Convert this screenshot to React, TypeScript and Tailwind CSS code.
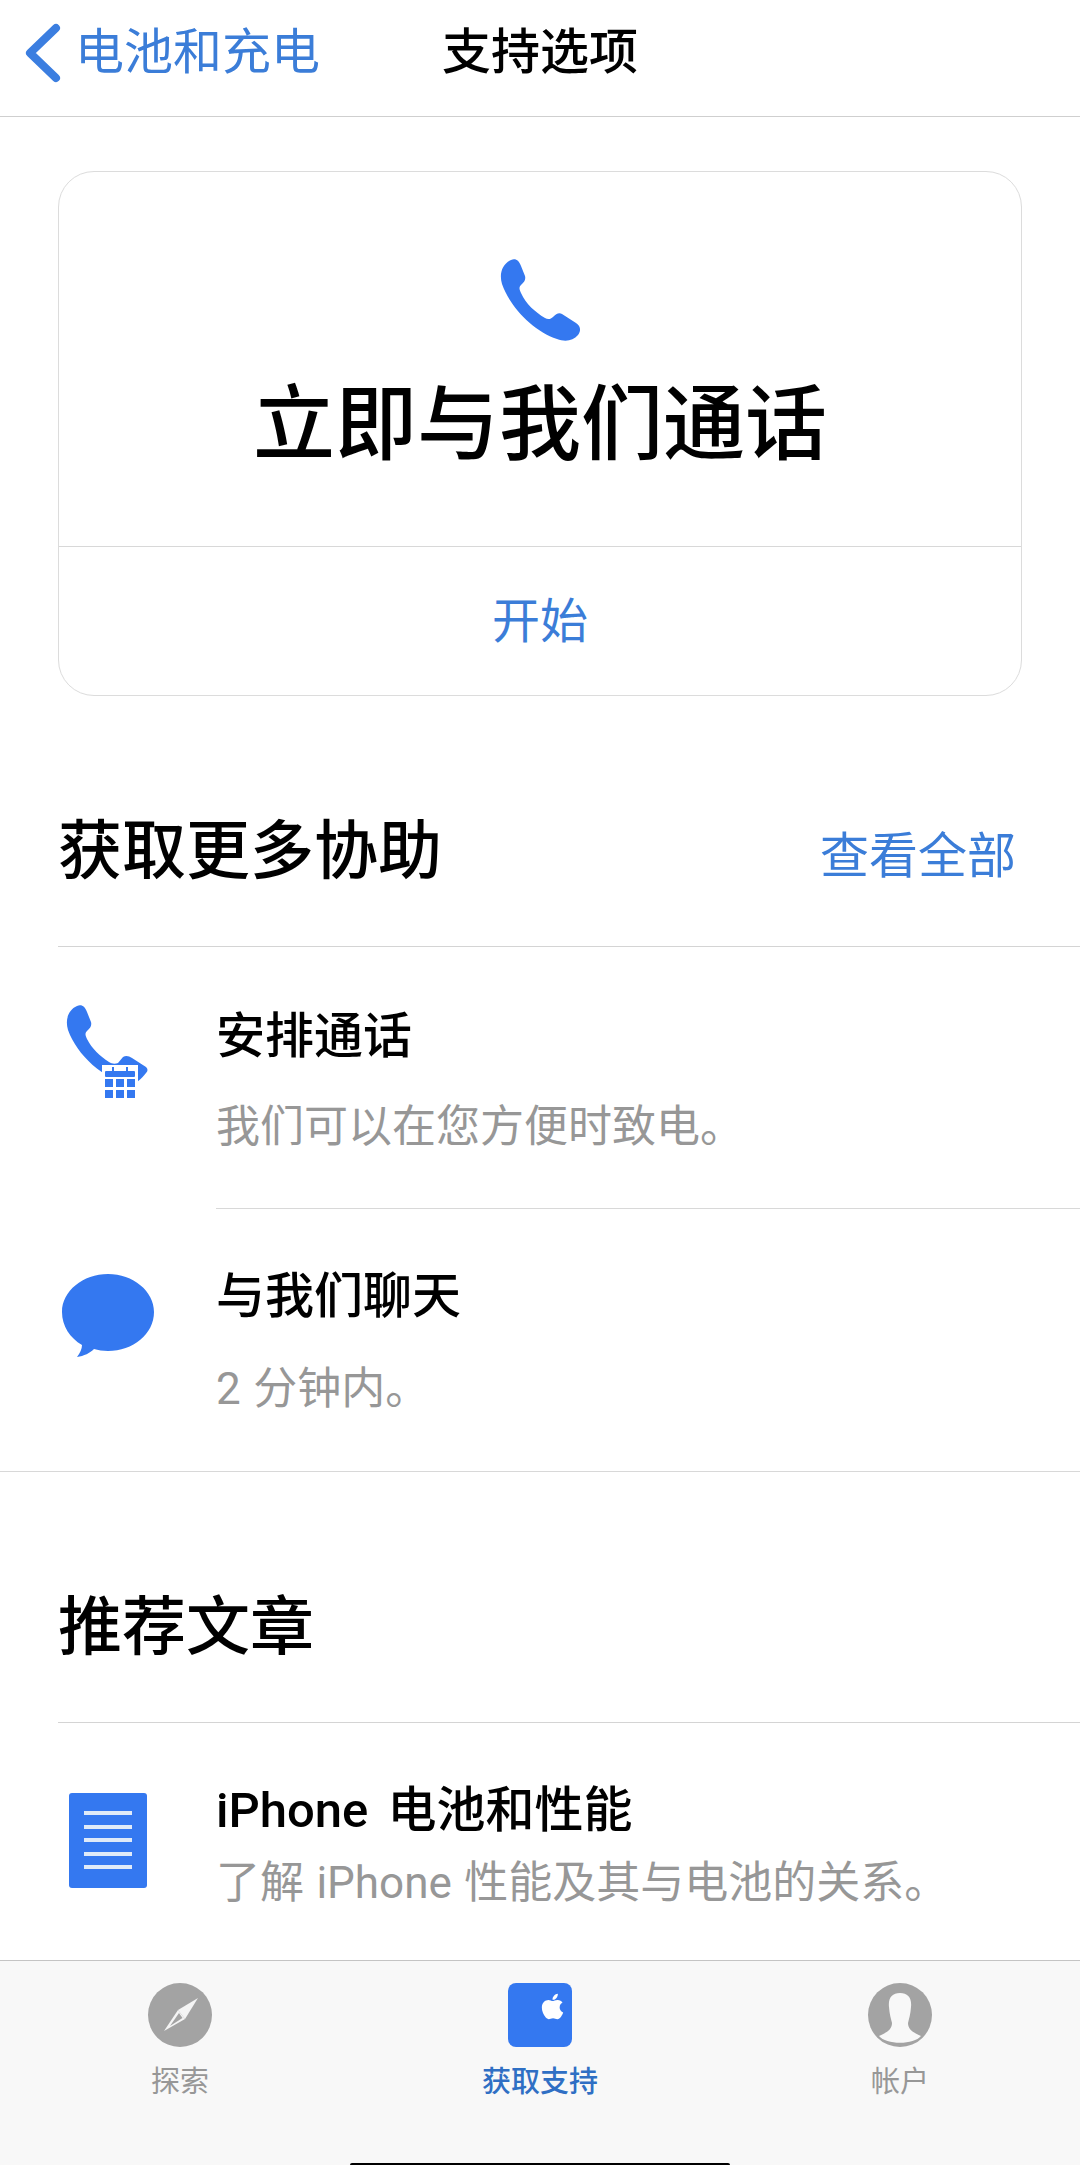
import { FaApple } from 'react-icons/fa'
import type { ReactNode } from 'react'

const handset =
  'M12 1C17-1 20 2 22 7L26 17C27 21 25 23 22 26C20 28 20 30 22 34C27 45 36 53 46 59C49 61 52 60 54 58C57 55 60 53 63 55L77 64C82 67 82 72 79 76C74 82 66 83 58 80C35 72 12 50 3 25C0 15 3 5 12 1Z'

function BackChevron() {
  return (
    <svg viewBox="0 0 36 60" className="ml-[25px] mr-[14px] w-[36px] h-[60px] shrink-0">
      <path d="M31 5L5 30L31 55" fill="none" stroke="#3b7ee0" strokeWidth="8" strokeLinecap="round" strokeLinejoin="round" />
    </svg>
  )
}

function PhoneIcon() {
  return (
    <svg viewBox="0 0 82 82" className="w-[82px] h-[82px]">
      <path d={handset} fill="#3478f0" />
    </svg>
  )
}

function PhoneCalendarIcon() {
  return (
    <svg viewBox="0 0 86 98" className="ml-[7px] mt-[58px] w-[86px] h-[98px]">
      <path
        d="M12 1C17-1 20 2 22 7L26 17C27 21 25 23 22 26C20 28 20 30 22 34C27 44 35 51 44 57C47 59 50 59 53 58L58 52C61 50 64 51 67 53L81 62C83 64 83 66 81 68C76 74 72 78 66 80C38 74 12 50 3 25C0 15 3 5 12 1Z"
        fill="#3478f0"
      />
      <rect x="37" y="60" width="36" height="38" fill="#ffffff" />
      <rect x="40" y="66" width="30" height="6" rx="1" fill="#3478f0" />
      <rect x="47" y="62" width="2" height="5" fill="#3478f0" />
      <rect x="61" y="62" width="2" height="5" fill="#3478f0" />
      <rect x="40" y="74" width="8" height="8" fill="#3478f0" />
      <rect x="51" y="74" width="8" height="8" fill="#3478f0" />
      <rect x="62" y="74" width="8" height="8" fill="#3478f0" />
      <rect x="40" y="85" width="8" height="8" fill="#3478f0" />
      <rect x="51" y="85" width="8" height="8" fill="#3478f0" />
      <rect x="62" y="85" width="8" height="8" fill="#3478f0" />
    </svg>
  )
}

function BubbleIcon() {
  return (
    <svg viewBox="0 0 92 83" className="ml-[4px] mt-[65px] w-[92px] h-[83px]">
      <path
        d="M46 0C71 0 92 17 92 38C92 60 71 77 46 77C41 77 36 76 32 75C28 79 22 82 15 83C18 79 20 75 20 71C8 64 0 52 0 38C0 17 21 0 46 0Z"
        fill="#3478f0"
      />
    </svg>
  )
}

function DocIcon() {
  return (
    <div className="ml-[11px] mt-[70px] w-[78px] h-[95px] rounded-[3px] bg-[#3478f0] flex flex-col gap-[9.5px] px-[15px] pt-[18px]">
      <div className="h-[4px] bg-[#dfeaf8]" />
      <div className="h-[4px] bg-[#dfeaf8]" />
      <div className="h-[4px] bg-[#dfeaf8]" />
      <div className="h-[4px] bg-[#dfeaf8]" />
      <div className="h-[4px] bg-[#dfeaf8]" />
    </div>
  )
}

function CompassIcon() {
  return (
    <svg viewBox="0 0 64 64" className="w-[64px] h-[64px]">
      <circle cx="32" cy="32" r="32" fill="#a3a3a3" />
      <path d="M50 15L37 36L30 27Z" fill="#f4f4f4" />
      <path d="M30 27L37 36L16 48Z" fill="#f4f4f4" />
      <path d="M31 30L34.5 35L22 43Z" fill="#a3a3a3" />
    </svg>
  )
}

function AccountIcon() {
  return (
    <svg viewBox="0 0 64 64" className="w-[64px] h-[64px]">
      <circle cx="32" cy="32" r="32" fill="#a3a3a3" />
      <path
        d="M32 10C24 10 20 15 21 24C21.5 31 23 36 24 40C24 46 20 49 11 53C18 62 46 62 53 53C44 49 40 46 40 40C41 36 42.5 31 43 24C44 15 40 10 32 10Z"
        fill="#f8f8f8"
      />
    </svg>
  )
}

function SectionHead({ title, action }: { title: string; action?: string }) {
  return (
    <div className="ml-[58px] h-[251px] border-b border-[#d4d4d4] flex items-end justify-between pb-[62px] pr-[64px]">
      <h2 className="text-[64px] leading-[64px] font-medium text-black">{title}</h2>
      {action && <span className="text-[49px] leading-[64px] text-[#3b7dd8] translate-y-[5px]">{action}</span>}
    </div>
  )
}

interface RowProps {
  icon: ReactNode
  title: string
  sub: string
  titleTop: string
  subGap: string
  className?: string
}

function Row({ icon, title, sub, titleTop, subGap, className }: RowProps) {
  return (
    <div className={`flex pl-[58px] ${className ?? ''}`}>
      <div className="w-[158px] shrink-0">{icon}</div>
      <div className={`flex flex-col ${titleTop} ${subGap}`}>
        <div className="text-[49px] leading-[60px] font-medium text-black whitespace-nowrap [word-spacing:7px]">{title}</div>
        <div className="text-[44px] leading-[60px] text-[#979797] whitespace-nowrap [word-spacing:1.5px]">{sub}</div>
      </div>
    </div>
  )
}

function Tab({ icon, label, active }: { icon: ReactNode; label: string; active?: boolean }) {
  return (
    <div className="flex flex-col items-center pt-[22px]">
      {icon}
      <span className={`mt-[19px] text-[29px] leading-[32px] ${active ? 'font-medium text-[#2f6fc4]' : 'text-[#979797]'}`}>
        {label}
      </span>
    </div>
  )
}

export default function App() {
  return (
    <div className="w-[1080px] h-[2165px] flex flex-col overflow-hidden bg-white [font-family:'Roboto','Noto_Sans_CJK_SC',sans-serif]">
      {/* Nav bar */}
      <header className="h-[117px] shrink-0 border-b border-[#cfcfcf] grid grid-cols-[1fr_auto_1fr] items-center pb-[11px]">
        <div className="flex items-center">
          <BackChevron />
          <span className="text-[49px] leading-[60px] text-[#3b7dd8]">电池和充电</span>
        </div>
        <h1 className="text-[49px] leading-[60px] font-medium text-black">支持选项</h1>
        <div />
      </header>

      <main className="flex-1 overflow-hidden">
        {/* Call card */}
        <div className="mt-[54px] mx-[58px] h-[525px] border border-[#dcdcdc] rounded-[36px] flex flex-col">
          <div className="h-[375px] border-b border-[#d8d8d8] flex flex-col items-center pt-[87px]">
            <PhoneIcon />
            <div className="mt-[36px] text-[82px] leading-[96px] font-medium text-black whitespace-nowrap">立即与我们通话</div>
          </div>
          <div className="flex-1 flex items-center justify-center pt-[2px] text-[48px] text-[#3b7dd8]">开始</div>
        </div>

        <SectionHead title="获取更多协助" action="查看全部" />
        <Row
          icon={<PhoneCalendarIcon />}
          title="安排通话"
          sub="我们可以在您方便时致电。"
          titleTop="pt-[60px]"
          subGap="gap-[30px]"
          className="h-[261px]"
        />
        <div className="ml-[216px] border-b border-[#d8d8d8]" />
        <Row
          icon={<BubbleIcon />}
          title="与我们聊天"
          sub="2 分钟内。"
          titleTop="pt-[58px]"
          subGap="gap-[32px]"
          className="h-[262px]"
        />
        <div className="border-b border-[#d8d8d8]" />

        <SectionHead title="推荐文章" />
        <Row
          icon={<DocIcon />}
          title="iPhone 电池和性能"
          sub="了解 iPhone 性能及其与电池的关系。"
          titleTop="pt-[58px]"
          subGap="gap-[12px]"
        />
      </main>

      {/* Tab bar */}
      <footer className="h-[205px] shrink-0 border-t border-[#c4c4c4] bg-[#f8f8f8] flex flex-col justify-between">
        <div className="grid grid-cols-3">
          <Tab icon={<CompassIcon />} label="探索" />
          <Tab
            active
            label="获取支持"
            icon={
              <div className="w-[64px] h-[64px] rounded-[8px] bg-[#3478f0] pl-[30px] pt-[9px] text-white">
                <FaApple size={29} />
              </div>
            }
          />
          <Tab icon={<AccountIcon />} label="帐户" />
        </div>
        <div className="self-center w-[380px] h-[2px] rounded-t-[2px] bg-black" />
      </footer>
    </div>
  )
}
